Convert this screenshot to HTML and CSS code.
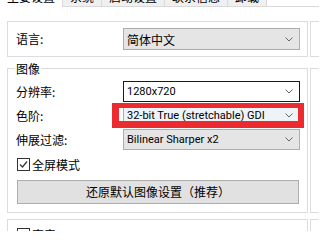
FILE: index.html
```html
<!DOCTYPE html>
<html lang="zh-CN">
<head>
<meta charset="utf-8">
<link rel="stylesheet" href="styles.css">
</head>
<body>
<div class="tabs">
  <div class="tab active">主要设置</div>
  <div class="tab">系统</div>
  <div class="tab">启动设置</div>
  <div class="tab">联系信息</div>
  <div class="tab">卸载</div>
</div>
<div class="page">
  <div class="col main">
    <div class="group lang">
      <div class="row">
        <span class="label">语言:</span>
        <div class="select">简体中文<svg class="chev" width="8" height="5" viewBox="0 0 8 5"><polyline points="0.5,0.5 4,4 7.5,0.5" fill="none" stroke="#666" stroke-width="1"/></svg></div>
      </div>
    </div>
    <div class="group image">
      <span class="legend">图像</span>
      <div class="row slim">
        <span class="label">分辨率:</span>
        <div class="select latin focus">1280x720<svg class="chev" width="8" height="5" viewBox="0 0 8 5"><polyline points="0.5,0.5 4,4 7.5,0.5" fill="none" stroke="#666" stroke-width="1"/></svg></div>
      </div>
      <div class="row slim">
        <span class="label">色阶:</span>
        <div class="select latin hover">32-bit True (stretchable) GDI<svg class="chev" width="8" height="5" viewBox="0 0 8 5"><polyline points="0.5,0.5 4,4 7.5,0.5" fill="none" stroke="#666" stroke-width="1"/></svg><span class="highlight"></span></div>
      </div>
      <div class="row slim">
        <span class="label">伸展过滤:</span>
        <div class="select latin">Bilinear Sharper x2<svg class="chev" width="8" height="5" viewBox="0 0 8 5"><polyline points="0.5,0.5 4,4 7.5,0.5" fill="none" stroke="#666" stroke-width="1"/></svg></div>
      </div>
      <div class="check fullscreen">
        <span class="box"><svg width="11" height="11" viewBox="0 0 11 11"><polyline points="2,5.5 4.5,8 9,2.5" fill="none" stroke="#333" stroke-width="1.2"/></svg></span>
        <span>全屏模式</span>
      </div>
      <div class="button">还原默认图像设置（推荐）</div>
    </div>
    <div class="group third">
      <div class="check">
        <span class="box"><svg width="11" height="11" viewBox="0 0 11 11"><polyline points="2,5.5 4.5,8 9,2.5" fill="none" stroke="#333" stroke-width="1.2"/></svg></span>
        <span>声音</span>
      </div>
    </div>
  </div>
  <div class="col side">
    <div class="group lang"></div>
    <div class="group image"></div>
    <div class="group third"></div>
  </div>
</div>
</body>
</html>
```
FILE: styles.css
```css
html, body {
  margin: 0;
  padding: 0;
  background: #fff;
  width: 319px;
  height: 231px;
  overflow: hidden;
  font-family: "Noto Sans CJK SC", "Noto Sans", sans-serif;
  font-size: 12px;
  color: #000;
}

.tabs {
  display: flex;
  height: 16px;
  margin-top: -10px;
  border-bottom: 1px solid #d9d9d9;
}

.tab {
  line-height: 14px;
  padding: 0 7px;
  background: #f0f0f0;
  border-right: 1px solid #d9d9d9;
  white-space: nowrap;
}

.tab.active {
  background: #fff;
  margin-bottom: -1px;
}

.page {
  display: flex;
  gap: 2px;
  padding-left: 7px;
}

.col {
  display: flex;
  flex-direction: column;
}

.col.main {
  width: 301px;
  flex: none;
}

.col.side {
  width: 40px;
  flex: none;
}

.group {
  border: 1px solid #dcdcdc;
  position: relative;
  box-sizing: border-box;
  flex: none;
}

.group.lang {
  margin-top: 14px;
  height: 36px;
  padding: 6px 7px 0 8px;
}

.group.image {
  margin-top: 11px;
  height: 145px;
  padding: 12px 7px 0 8px;
  display: flex;
  flex-direction: column;
  gap: 3px;
}

.group.third {
  margin-top: 6px;
  height: 40px;
  padding: 8px 7px 0 9px;
}

.legend {
  position: absolute;
  top: -7px;
  left: 7px;
  padding: 0 1px;
  background: #fff;
  line-height: 13px;
}

.row {
  display: flex;
  align-items: center;
  height: 22px;
  flex: none;
}

.row.slim {
  height: 21px;
}

.label {
  width: 107px;
  flex: none;
  line-height: 20px;
}

.select {
  position: relative;
  box-sizing: border-box;
  width: 177px;
  height: 100%;
  border: 1px solid #adadad;
  background: #e5e5e5;
  display: flex;
  align-items: center;
  justify-content: space-between;
  padding: 0 6px 0 3px;
  white-space: nowrap;
}

.select.latin {
  font-family: Roboto, "Liberation Sans", sans-serif;
  font-size: 11px;
}

.select.focus {
  background: #fff;
  border-color: #1a1a1a;
}

.select.hover {
  background: #eef3f8;
}

.chev {
  flex: none;
}

.highlight {
  position: absolute;
  left: -12px;
  top: -3px;
  width: 192px;
  height: 25px;
  box-sizing: border-box;
  border-style: solid;
  border-color: #ec2b30;
  border-width: 5px 6px 7px 7px;
}

.check {
  display: flex;
  align-items: center;
  gap: 2px;
  height: 13px;
  line-height: 13px;
  flex: none;
}

.check.fullscreen {
  margin-top: 5px;
  margin-left: 1px;
}

.box {
  box-sizing: border-box;
  width: 13px;
  height: 13px;
  border: 1px solid #333;
  background: #fff;
  display: flex;
  align-items: center;
  justify-content: center;
  flex: none;
}

.button {
  margin-top: 6px;
  margin-left: 1px;
  box-sizing: border-box;
  width: 282px;
  height: 24px;
  line-height: 22px;
  text-align: center;
  background: #e1e1e1;
  border: 1px solid #adadad;
  flex: none;
}
```
